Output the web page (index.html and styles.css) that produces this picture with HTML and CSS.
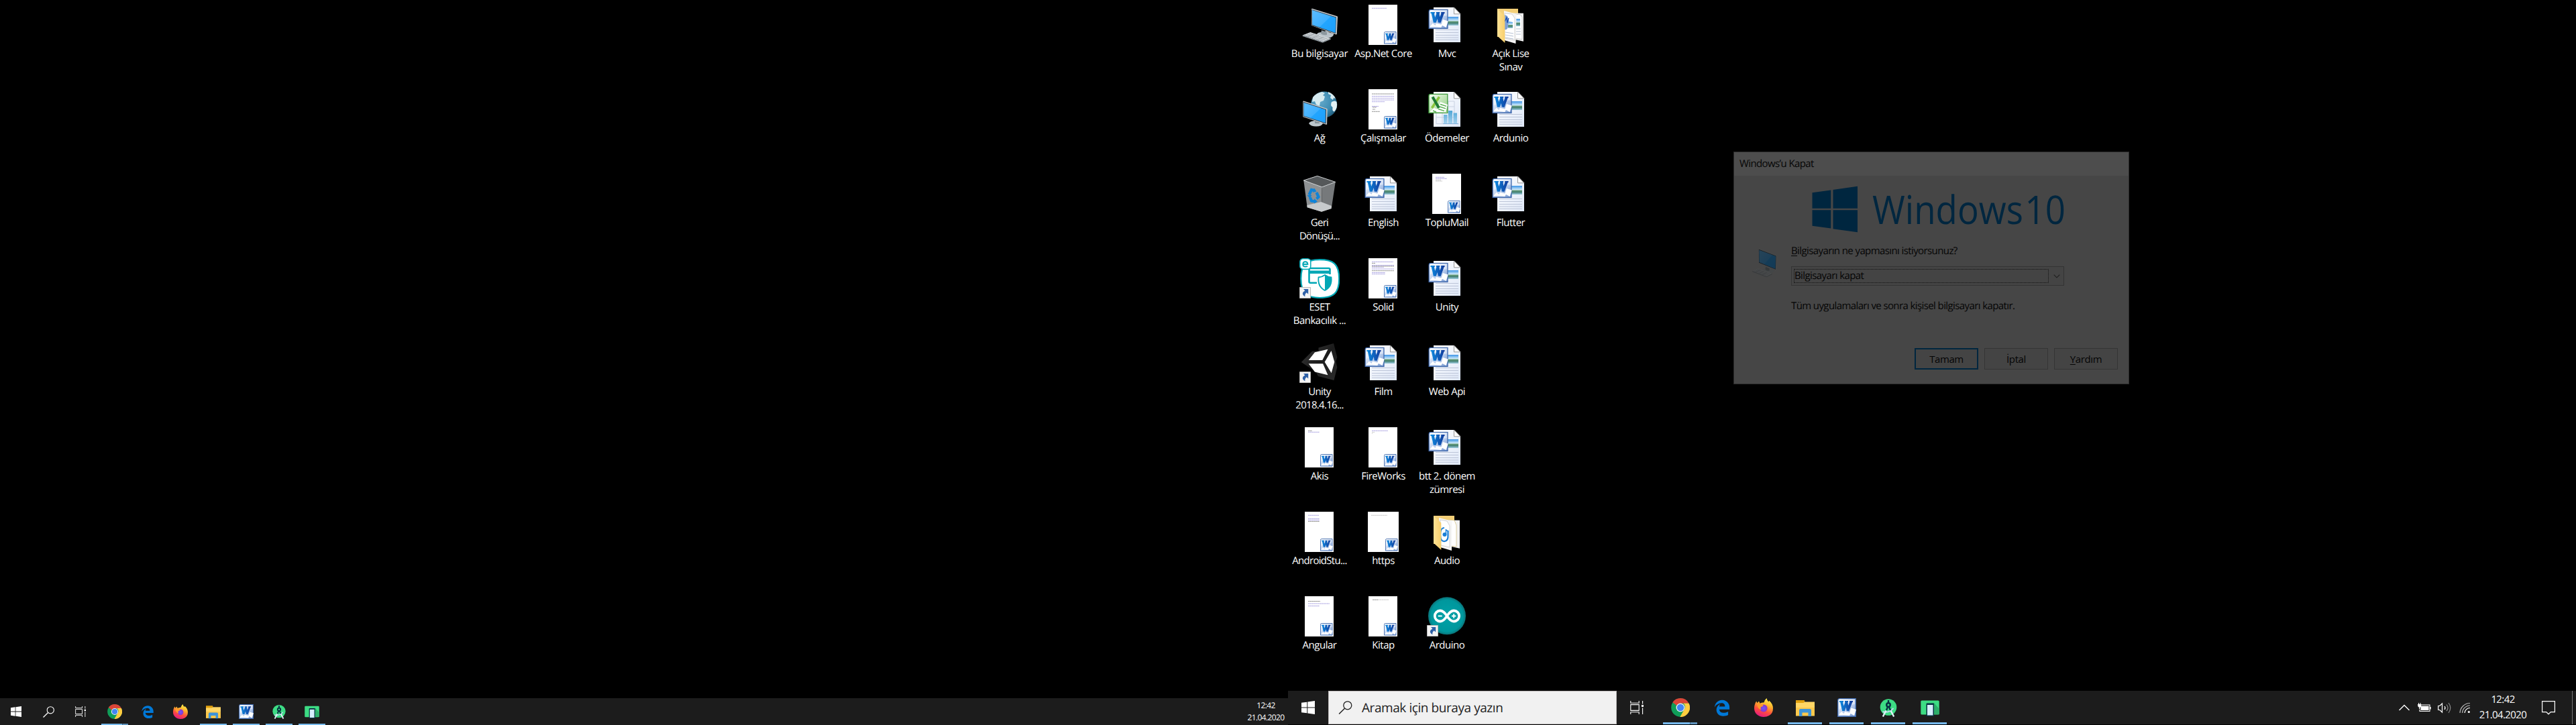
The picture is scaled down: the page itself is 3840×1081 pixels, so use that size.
FILE: index.html
```html
<!DOCTYPE html>
<html lang="tr">
<head>
<meta charset="utf-8">
<title>Masaüstü</title>
<link rel="stylesheet" href="styles.css">
</head>
<body>
<svg class="defs" aria-hidden="true">
  <defs>
    <linearGradient id="gScreen" x1="0" y1="0" x2="1" y2="1"><stop offset="0" stop-color="#5cbcff"/><stop offset=".52" stop-color="#3fb0ff"/><stop offset=".54" stop-color="#22a5ff"/><stop offset="1" stop-color="#1e9ffb"/></linearGradient>
    <linearGradient id="gPaper" x1="0" y1="0" x2="1" y2="1"><stop offset="0" stop-color="#fff"/><stop offset="1" stop-color="#dfe8f8"/></linearGradient>
    <linearGradient id="gWord" x1="0" y1="0" x2="1" y2="1"><stop offset="0" stop-color="#fafdff"/><stop offset=".6" stop-color="#b7cbec"/><stop offset="1" stop-color="#6f91cb"/></linearGradient>
    <linearGradient id="gW" gradientUnits="userSpaceOnUse" x1="3" y1="0" x2="23" y2="0"><stop offset="0" stop-color="#0d8be0"/><stop offset="1" stop-color="#123a9c"/></linearGradient>
    <linearGradient id="gExcel" x1="0" y1="0" x2="1" y2="1"><stop offset="0" stop-color="#f6fff2"/><stop offset="1" stop-color="#8ccb7c"/></linearGradient>
    <linearGradient id="gPhoto" x1="0" y1="0" x2="0" y2="1"><stop offset="0" stop-color="#3c94e6"/><stop offset=".45" stop-color="#cfeafa"/><stop offset=".55" stop-color="#6da07c"/><stop offset=".7" stop-color="#3f7d6c"/><stop offset="1" stop-color="#9ccbe2"/></linearGradient>
    <linearGradient id="gBar" x1="0" y1="0" x2="0" y2="1"><stop offset="0" stop-color="#4fa6d6"/><stop offset="1" stop-color="#a7d3ee"/></linearGradient>
    <linearGradient id="gFolder" x1="0" y1="0" x2="1" y2="0"><stop offset="0" stop-color="#ffe294"/><stop offset="1" stop-color="#f7cf6c"/></linearGradient>
    <radialGradient id="gGlobe" cx=".35" cy=".35" r=".75"><stop offset="0" stop-color="#66aacb"/><stop offset=".6" stop-color="#3e8db3"/><stop offset="1" stop-color="#1d5674"/></radialGradient>
    <linearGradient id="gFox" x1=".7" y1="0" x2=".3" y2="1"><stop offset="0" stop-color="#fff44f"/><stop offset=".35" stop-color="#ffb02b"/><stop offset=".65" stop-color="#ff4f3d"/><stop offset="1" stop-color="#e31587"/></linearGradient>
    <radialGradient id="gFoxCore"><stop offset="0" stop-color="#6b5cff"/><stop offset="1" stop-color="#9032c8"/></radialGradient>
    <radialGradient id="gArd"><stop offset="0" stop-color="#00a2a7"/><stop offset=".85" stop-color="#00979d"/><stop offset="1" stop-color="#0b7277"/></radialGradient>
    <linearGradient id="gUnity" x1="0" y1="0" x2="1" y2="1"><stop offset="0" stop-color="#3c3c3c"/><stop offset=".5" stop-color="#1c1c1c"/><stop offset="1" stop-color="#2c2c2c"/></linearGradient>
  </defs>

  <symbol id="pc" viewBox="0 0 60 60">
    <path d="M26 44q1-3 8-3l6-2 6 3q6 0 5 3-2 5-12 5-11-1-13-6z" fill="#b9c2c9"/>
    <path d="M33 38l8 3v4q-6 1-9-2z" fill="#8d989f"/>
    <path d="M18 6.300l1-.6 37.400 11.600.6.800-1.200 26-1 .4L18 31z" fill="#c9ced1"/>
    <path d="M18.400 7L55 18.600 54.200 43 18.600 31z" fill="#333b42"/>
    <path d="M19 8l35.400 11.200-.8 22.800L19.200 30z" fill="url(#gScreen)"/>
    <path d="M4.700 45.500L16.300 41l30.400 9.400-12 5.200z" fill="#cfd4d8"/>
    <path d="M8 45.200l27 8.600M11 44l27.500 8.600M14.500 42.700l27.500 8.500M12 47.600l10-4.300M19 50l10-4.200M26 52.500l10-4.500" stroke="#8b949b" stroke-width=".6" fill="none"/>
    <path d="M4.700 45.500l30 10 12-5.200v1.400l-12 5.100-30-9.800z" fill="#8f999f"/>
  </symbol>
  <symbol id="network" viewBox="0 0 60 60">
    <circle cx="36.700" cy="23" r="19.600" fill="url(#gGlobe)"/>
    <path d="M20 12q6-7 14-8l4 2-3 3 3 2-2 6-5 2-1 6-5-2-2-5-4 1z" fill="#d6ebf0"/>
    <path d="M43 4q8 3 11 10l-3-1-1 3-4-3 1-4-4-2z" fill="#d6ebf0"/>
    <path d="M48 19q5-3 7.500 0 2 8-3 14-4 1-3-6-4-3-1.500-8z" fill="#e2f1f4"/>
    <path d="M14 51q2-4 11-4t10 4q-2 4.500-10 4.500T14 51z" fill="#bcc6cc"/>
    <path d="M23 44l7 2v5h-7z" fill="#87939a"/>
    <path d="M5.300 18l1-.5L41 28.900l.6.800-.5 22.800-1 .2L5.400 41.200z" fill="#cdd2d5"/>
    <path d="M5.800 18.800L40 30l-.3 21.500L5.900 40.600z" fill="#333b42"/>
    <path d="M6.500 20L39 30.600l-.3 19.600L6.500 39.800z" fill="url(#gScreen)"/>
  </symbol>
  <symbol id="bin" viewBox="0 0 60 60">
    <path d="M6.300 10L26.700 3.400l27 9-20 7.500z" fill="#55585a"/>
    <path d="M6.300 10l27.400 9.900L33 56.700l-21.300-6.400z" fill="#8e9193"/>
    <path d="M33.700 19.900l20-7.500-6 39.600L33 56.700z" fill="#76797b"/>
    <path d="M11.300 47l21-5 15.700 6-.4 4L33 56.700l-21.300-6.400z" fill="#c7cacc"/>
    <path d="M6.300 10L26.700 3.400l27 9-20 7.500z" fill="none" stroke="#d5d8da" stroke-width="1"/>
    <g fill="none" stroke="#0f83d8" stroke-width="4.200"><path d="M14.500 31.500l3.500-7.500 5 1"/><path d="M25.500 28l3 6.500-3 3"/><path d="M24 41.500l-6-1-2-5"/></g>
    <path d="M11.500 32h7l-3 5zM22 21.500l3.500 5-5.500 1.500zM22 37v7.500l5-3z" fill="#0f83d8"/>
  </symbol>
  <symbol id="shortcut" viewBox="0 0 17 17">
    <path d="M.5.500h16v16H.5z" fill="#f3f3f3" stroke="#b9b9b9"/>
    <path d="M6 3h7.200v7.600l-2.400-2.400Q7.500 10.500 8.500 14.300 4.800 12 4.800 9.400q.2-2.200 3.600-3.900z" fill="#2d5fa6"/>
  </symbol>
  <symbol id="eset" viewBox="0 0 60 60">
    <path d="M30 2.200C50 2.200 59.200 8 59.200 30.500S50 59 30.500 59 2.300 52 2.300 30.500 10 2.200 30 2.200z" fill="#fff" stroke="#00a7b5" stroke-width="2.200"/>
    <path d="M26 36.800H16.500q-2 0-2-2V17q0-2 2-2h27q2 0 2 2v7" fill="none" stroke="#00a7b5" stroke-width="2.600"/>
    <path d="M14 18.500h32V23H14z" fill="#00a7b5"/>
    <path d="M38 25q4 3 9.500 3.500Q49 42.500 38 48 27 42.500 28.500 28.500 34 28 38 25z" fill="#fff" stroke="#00a7b5" stroke-width="1.800"/>
    <path d="M38 25q4 3 9.500 3.500Q49 42.500 38 48z" fill="#00a7b5"/>
    <rect x=".8" y=".8" width="16" height="15.600" rx="4.500" fill="#fff" stroke="#00a7b5" stroke-width="1.500"/>
    <path d="M5.500 8.900h6.800q-.2-3.600-3.500-3.600T5.300 9t3.700 3.600q1.800 0 3-.9" fill="none" stroke="#00a7b5" stroke-width="2"/>
    <use href="#shortcut" x="0" y="43" width="17" height="17"/>
  </symbol>
  <symbol id="unity" viewBox="0 0 60 60">
    <path d="M2.800 29L19 12.800l9.500-.3V7.500L51 1l5.300 20.500-2 6.500 2 8.500L51.500 56 28 50l-4-7z" fill="url(#gUnity)"/>
    <path d="M13.700 26L23 14.300 42.500 9.700 34.300 26zM13.700 31.300h21.400l7.400 17L23 43.500zM37.700 28.700L47.500 12l4.800 16.800-4.600 16.500z" fill="#fff"/>
    <use href="#shortcut" x="0" y="43" width="17" height="17"/>
  </symbol>
  <symbol id="arduino" viewBox="0 0 60 60">
    <circle cx="30" cy="29.300" r="28" fill="url(#gArd)"/>
    <path d="M30 29.500c-3.500-5.500-6-8-10.200-8a8 8 0 0 0 0 16c4.200 0 6.700-2.500 10.200-8s6-8 10.200-8a8 8 0 0 1 0 16c-4.200 0-6.700-2.500-10.200-8z" fill="none" stroke="#fff" stroke-width="3.800"/>
    <path d="M16.700 29.500h6M37 29.500h6.400M40.200 26.300v6.400" stroke="#fff" stroke-width="1.800"/>
    <use href="#shortcut" x="0" y="43" width="17" height="17"/>
  </symbol>

  <symbol id="wordmark-tile" viewBox="0 0 28 28">
    <path d="M3.500.700h23.800v26.600H.7V3.500Q.7.700 3.500.700z" fill="url(#gWord)" stroke="#3b64a8" stroke-width="1.300"/>
    <path d="M2 2h24v7Q12 10 2 17z" fill="#fff" opacity=".45"/>
    <path d="M6 5l3 13.500L13.500 6l2 12.500L20.500 5" fill="none" stroke="url(#gW)" stroke-width="3.800" stroke-linejoin="bevel"/>
    <path d="M3 5h6M11 5h5M18 5h5" stroke="url(#gW)" stroke-width="1.800"/>
    <path d="M2 25l4-5 6 5zM11 20l9 2-2 4-9-1zM20.500 14.500l7.500 2.500-3 9-7-4z" fill="#fff"/>
  </symbol>
  <symbol id="docbase" viewBox="0 0 60 60">
    <path d="M10 4h30.500L50 13.500V56H10z" fill="url(#gPaper)"/>
    <path d="M40.500 4v9.800H50z" fill="#fff" stroke="#8c8c8c" stroke-width=".9"/>
  </symbol>
  <symbol id="word" viewBox="0 0 60 60">
    <use href="#docbase" width="60" height="60"/>
    <rect x="31" y="18" width="16" height="13" fill="url(#gPhoto)"/>
    <path d="M13 37.500h34M13 41.500h34M13 45.500h34M13 49h34M13 52.300h34" stroke="#bcc5d8" stroke-width="1"/>
    <use href="#wordmark-tile" x="2.300" y="6.700" width="29.500" height="29.500"/>
  </symbol>
  <symbol id="excel" viewBox="0 0 60 60">
    <use href="#docbase" width="60" height="60"/>
    <path d="M14 18h27v33.500H14zM14 26h27M14 34h27M14 42h27M23 18v33M32 18v33" fill="none" stroke="#c9d2e2" stroke-width="1"/>
    <path d="M25 38h5.500v13.300H25zM32 32h6v19.300h-6zM39.500 35.500H45v15.800h-5.500z" fill="url(#gBar)"/>
    <path d="M24 51.500h23" stroke="#86b4dd"/>
    <path d="M5.500 7.400h25.300v28H3V10q0-2.600 2.500-2.600z" fill="url(#gExcel)" stroke="#3f9a3c" stroke-width="1.300"/>
    <path d="M4.500 34l6-6 20.500 6.500zM20 19l11 4-3 11-12-4z" fill="#fff"/>
    <path d="M20 22.500l9 2.800M19 26l9 2.800M17 29.500l9 2.800M9 32l5 2" stroke="#55ae4e" stroke-width="1.400"/>
    <path d="M18.500 11.500L7.500 28" stroke="#8cc63f" stroke-width="3.600"/><path d="M8.500 11.500L18 28" stroke="#1f7a33" stroke-width="4"/>
  </symbol>
  <symbol id="page" viewBox="0 0 60 60">
    <path d="M8 0h43v60H8z" fill="#fff"/>
    <use href="#wordmark-tile" x="31" y="40" width="18.700" height="18.700"/>
  </symbol>
  <symbol id="folderbase" viewBox="0 0 60 60">
    <path d="M10 6h31v42H10z" fill="#f3cf78"/>
    <path d="M30 12.500l19 .3v42L32 51z" fill="#f1f1f1"/>
  </symbol>
  <symbol id="folder-docs" viewBox="0 0 60 60">
    <use href="#folderbase" width="60" height="60"/>
    <path d="M36 14l8 .5 3 4v33l-10-1z" fill="#fff" stroke="#999" stroke-width=".5"/>
    <path d="M38 21h6v11h-6z" fill="url(#gPhoto)"/>
    <path d="M38 36h7M38 40h7M38 44h7" stroke="#b5c0d2"/>
    <path d="M20 9l18.500 5-1 44-17-5z" fill="#f5f5f5"/>
    <path d="M21 13l11 1 4 6v33l-15-3z" fill="#fff" stroke="#aaa" stroke-width=".5"/>
    <path d="M26 25l7 1v9h-7z" fill="url(#gPhoto)"/>
    <path d="M21 15q6 2 6 9l-1 9q-1 5-5 4z" fill="#7fa1d6"/>
    <path d="M21 25l3-6 1 8 2-7" stroke="#1c4fae" stroke-width="1.300" fill="none"/>
    <path d="M22 41l12 2M22 45l12 2M22 49l12 2" stroke="#b5c0d2"/>
    <path d="M10 6.500l11.300 10V57L10 46.500z" fill="url(#gFolder)"/>
  </symbol>
  <symbol id="folder-audio" viewBox="0 0 60 60">
    <use href="#folderbase" width="60" height="60"/>
    <path d="M32 12l9 1 3 7v32l-8-1z" fill="#fff" stroke="#d8c58b" stroke-width=".8"/>
    <path d="M18 9l19.500 5-.5 44-17-5z" fill="#f5f5f5"/>
    <path d="M20 12l10 2 4 7v32l-13-3z" fill="#fff" stroke="#bbb" stroke-width=".6"/>
    <path d="M26 24q-6 0-6 10.500T27 44q5-1 4.500-9V28" fill="none" stroke="#1b7fd6" stroke-width="2.200"/>
    <circle cx="26.500" cy="34" r="3" fill="#1b7fd6"/><path d="M28.500 34V27l3 2" stroke="#1b7fd6" stroke-width="1.500" fill="none"/>
    <path d="M10 6.500l11.300 10V57L10 46.500z" fill="url(#gFolder)"/>
  </symbol>

  <symbol id="winlogo" viewBox="0 0 20 20"><path d="M0 2.800l8.300-1.100v7.800H0zM9.300 1.500L20 0v9.500H9.300zM0 10.500h8.300v7.800L0 17.200zM9.300 10.500H20V20L9.300 18.500z" fill="#fff"/></symbol>
  <symbol id="search" viewBox="0 0 20 20"><circle cx="13.300" cy="6.800" r="6" fill="none" stroke="currentColor" stroke-width="1.300"/><path d="M9 11.200L.6 19.500" stroke="currentColor" stroke-width="1.500"/></symbol>
  <symbol id="taskview" viewBox="0 0 20 20"><path d="M.8 0v3.300h12.400V0M.8 20v-3.300h12.400V20M.8 5.600h12.400v8.800H.8zM18.600 0v4.500M18.600 10.500V20" fill="none" stroke="#fff" stroke-width="1.100"/><path d="M17 6h3v3h-3z" fill="#fff"/></symbol>
  <symbol id="chrome" viewBox="0 0 28 28">
    <circle cx="14" cy="14" r="13.800" fill="#0f9d58"/>
    <path d="M14 0a14 14 0 0 1 12.600 7.700H14a6.300 6.300 0 0 0-5.600 3.400L2.300 6.300A14 14 0 0 1 14 0z" fill="#db4437"/>
    <path d="M26.600 7.700a14 14 0 0 1-13.300 20.300l6.200-10.700a6.300 6.300 0 0 0-1.500-9.600z" fill="#ffcd40"/>
    <circle cx="14" cy="14" r="6.500" fill="#f1f1f1"/><circle cx="14" cy="14" r="5.200" fill="#4285f4"/>
  </symbol>
  <symbol id="edge" viewBox="-34 -40 580 560"><path fill="#0078d7" d="M486.290 243.670c0-44.032-7.754-84.465-28.801-122.400C416.498 47.879 343.912 8.001 258.893 8.001 118.962 7.724 40.617 113.214 26.330 227.680c42.429-61.312 117.073-121.376 220.375-124.966 0 0 109.666 0 99.420 104.957H169.997c6.369-37.386 18.554-58.986 34.339-78.926-75.048 34.900-121.850 96.100-120.742 188.320.830 71.448 50.124 144.836 120.743 171.976 83.357 31.843 192.760 7.200 240.132-21.324V363.307c-80.864 56.494-270.871 60.924-272.255-67.572h314.073v-52.065z"/></symbol>
  <symbol id="firefox" viewBox="0 0 28 28">
    <path d="M14 28C6 28 0 22.500 0 15 0 11 1.200 7.500 3.200 4.500L4.500 7.300 7 4.500l1.500 3.200Q12 6 14.500 6.500 15 3 18.500 0q.5 3.500 3 5.500Q22 4.500 22 3.500q6 5 6 11.500 0 8-6 11-3.500 2-8 2z" fill="url(#gFox)"/>
    <circle cx="14" cy="15" r="5.600" fill="url(#gFoxCore)"/>
    <path d="M4 9q5-2 9.500 1.500Q13 12.500 10 13q-1.500 2 .5 4Q6 17.500 4 9z" fill="#ff9a2b"/>
  </symbol>
  <symbol id="explorer" viewBox="0 0 28 28">
    <path d="M0 5.500h28v20.800H0z" fill="#ffd666"/>
    <path d="M0 7h11.500l2-2.500-1-1.500H0z" fill="#e0a00d"/><path d="M0 14h28v12.300H0z" fill="#fbc84c"/>
    <path d="M5 27V18q0-2 2-2h14q2 0 2 2v9h-4.500v-5.500h-9V27z" fill="#3d94d9"/>
  </symbol>
  <symbol id="astudio" viewBox="0 0 28 28">
    <circle cx="14" cy="13.500" r="12.300" fill="#3ddc84"/>
    <path d="M5.500 20q8.500 3 16-5" fill="none" stroke="#b8d8ea" stroke-width="2"/>
    <path d="M14 3v5" stroke="#073042" stroke-width="2.400"/><circle cx="14" cy="10" r="4" fill="#073042"/><circle cx="14" cy="10" r="1.500" fill="#3ddc84"/>
    <path d="M13 13l-2 5M15 13l2 5" stroke="#073042" stroke-width="2.400"/>
    <path d="M10.500 18.500L5.800 27.500M17.500 18.500l4.700 9" stroke="#e3eff7" stroke-width="2.400"/>
  </symbol>
  <symbol id="emulator" viewBox="0 0 28 28">
    <rect x=".3" y="3.500" width="27.400" height="21" rx="1.500" fill="#3ddc84"/>
    <path d="M14 8l6-1 7.700 9v8H12z" fill="#2cae6a"/>
    <rect x="8.500" y="7.500" width="11.500" height="19.500" rx="1" fill="#073042"/><path d="M10 10h8.500v15.500H10z" fill="#d7effe"/>
  </symbol>
</svg>

<main class="screens">
  <section class="monitor monitor--left">
    <div class="wallpaper"></div>
    <footer class="taskbar taskbar--small">
      <div class="sys"><svg width="16" height="16"><use href="#winlogo"/></svg></div>
      <div class="sys"><svg width="17" height="17"><use href="#search"/></svg></div>
      <div class="sys"><svg width="16" height="16"><use href="#taskview"/></svg></div>
      <nav class="apps">
        <div class="app running grouped"><svg><use href="#chrome"/></svg></div>
        <div class="app"><svg><use href="#edge"/></svg></div>
        <div class="app"><svg><use href="#firefox"/></svg></div>
        <div class="app running"><svg><use href="#explorer"/></svg></div>
        <div class="app running"><svg><use href="#wordmark-tile"/></svg></div>
        <div class="app running"><svg><use href="#astudio"/></svg></div>
        <div class="app running"><svg><use href="#emulator"/></svg></div>
      </nav>
      <div class="clock"><span>12:42</span><span>21.04.2020</span></div>
    </footer>
  </section>

  <section class="monitor monitor--right">
    <div class="wallpaper icons">
      <div class="icon"><svg><use href="#pc"/></svg><p class="loose">Bu bilgisayar</p></div>
      <div class="icon"><svg><use href="#network"/></svg><p>Ağ</p></div>
      <div class="icon"><svg><use href="#bin"/></svg><p class="cut">Geri<br>Dönüşü...</p></div>
      <div class="icon"><svg><use href="#eset"/></svg><p>ESET<br>Bankacılık ...</p></div>
      <div class="icon"><svg><use href="#unity"/></svg><p class="cut">Unity<br>2018.4.16...</p></div>
      <div class="icon"><svg viewBox="0 0 60 60"><use href="#page"/><path class="ink" d="M13 5.300h6"/><path class="link" d="M13 7.300h17"/></svg><p>Akis</p></div>
      <div class="icon"><svg viewBox="0 0 60 60"><use href="#page"/><path class="link" d="M13 5.300h16M13 10.500h17M13 12.500h17"/><path class="ink" d="M13 14.500h17"/></svg><p class="cut">AndroidStu...</p></div>
      <div class="icon"><svg viewBox="0 0 60 60"><use href="#page"/><path class="ink" d="M13 7.500h18"/><path class="link" d="M13 11h32M13 14.500h17"/></svg><p>Angular</p></div>

      <div class="icon"><svg viewBox="0 0 60 60"><use href="#page"/><path class="link" d="M13 5.300h22"/></svg><p>Asp.Net Core</p></div>
      <div class="icon"><svg viewBox="0 0 60 60"><use href="#page"/><path class="ink" d="M13 7h33M14 27h6M14 30h4M13 33.300h12"/><path class="link" d="M13 10.500h33M13 13.300h33M13 16h33M13 18.700h19M13 25.500h10"/></svg><p>Çalışmalar</p></div>
      <div class="icon"><svg><use href="#word"/></svg><p>English</p></div>
      <div class="icon"><svg viewBox="0 0 60 60"><use href="#page"/><path class="link" d="M13 5.500h32M13 10.500h33M13 13.300h18M13 16h33M13 21.500h20M13 23.500h20"/><path class="ink" d="M13 7.500h5M13 12h33M13 18.700h33"/></svg><p>Solid</p></div>
      <div class="icon"><svg><use href="#word"/></svg><p>Film</p></div>
      <div class="icon"><svg viewBox="0 0 60 60"><use href="#page"/><path class="link" d="M13 5.300h24"/><path class="faint" d="M13 7.500h4M13 9.500h1"/></svg><p>FireWorks</p></div>
      <div class="icon"><svg viewBox="0 0 60 60"><path d="M7 0h46v60H7z" fill="#fff"/><use href="#wordmark-tile" x="33" y="40" width="18.700" height="18.700"/><path class="faint" d="M12 5.300h24"/></svg><p>https</p></div>
      <div class="icon"><svg viewBox="0 0 60 60"><use href="#page"/><path class="ink" d="M14 5.300h8"/><path class="faint" d="M22 5.300h16"/></svg><p>Kitap</p></div>

      <div class="icon"><svg><use href="#word"/></svg><p>Mvc</p></div>
      <div class="icon"><svg><use href="#excel"/></svg><p>Ödemeler</p></div>
      <div class="icon"><svg viewBox="0 0 60 60"><use href="#page"/><path class="link" d="M13 5.300h13M13 7.300h17"/><path class="faint" d="M13 9.300h8M13 11h10"/></svg><p>TopluMail</p></div>
      <div class="icon"><svg><use href="#word"/></svg><p>Unity</p></div>
      <div class="icon"><svg><use href="#word"/></svg><p>Web Api</p></div>
      <div class="icon"><svg><use href="#word"/></svg><p>btt 2. dönem<br>zümresi</p></div>
      <div class="icon"><svg><use href="#folder-audio"/></svg><p>Audio</p></div>
      <div class="icon"><svg><use href="#arduino"/></svg><p>Arduino</p></div>

      <div class="icon"><svg><use href="#folder-docs"/></svg><p>Açık Lise<br>Sınav</p></div>
      <div class="icon"><svg><use href="#word"/></svg><p>Ardunio</p></div>
      <div class="icon"><svg><use href="#word"/></svg><p>Flutter</p></div>
    </div>

    <div class="dialog" role="dialog">
      <header class="dialog-title">Windows’u Kapat</header>
      <svg class="brand" viewBox="0 0 376 70">
        <path d="M.5 10.300L28.300 6.500v27.300H.5zM31.500 6L68 .8v33H31.500zM.5 36.300h27.800v27.300L.5 59.800zM31.500 36.300H68v33L31.500 64.200z" fill="#00263f"/>
        <text x="90" y="56.500" textLength="288" lengthAdjust="spacingAndGlyphs">Windows<tspan dx="3">10</tspan></text>
      </svg>
      <div class="dialog-body">
        <svg class="dialog-pc" viewBox="0 0 60 60" preserveAspectRatio="none"><use href="#pc" width="60" height="60"/></svg>
        <div class="form">
          <label><u>B</u>ilgisayarın ne yapmasını istiyorsunuz?</label>
          <div class="combo"><span>Bilgisayarı kapat</span><svg width="10" height="6" viewBox="0 0 10 6"><path d="M.7.700L5 5 9.300.700" fill="none" stroke="#222" stroke-width="1.200"/></svg></div>
          <p>Tüm uygulamaları ve sonra kişisel bilgisayarı kapatır.</p>
        </div>
      </div>
      <div class="buttons">
        <button class="primary">Tamam</button><button>İptal</button><button><u>Y</u>ardım</button>
      </div>
    </div>

    <footer class="taskbar taskbar--large">
      <div class="sys"><svg width="20" height="20"><use href="#winlogo"/></svg></div>
      <div class="searchbox"><svg width="21" height="20"><use href="#search"/></svg><span>Aramak için buraya yazın</span></div>
      <div class="sys"><svg width="20" height="20"><use href="#taskview"/></svg></div>
      <nav class="apps">
        <div class="app running grouped"><svg><use href="#chrome"/></svg></div>
        <div class="app"><svg><use href="#edge"/></svg></div>
        <div class="app"><svg><use href="#firefox"/></svg></div>
        <div class="app running"><svg><use href="#explorer"/></svg></div>
        <div class="app running"><svg><use href="#wordmark-tile"/></svg></div>
        <div class="app running"><svg><use href="#astudio"/></svg></div>
        <div class="app running"><svg><use href="#emulator"/></svg></div>
      </nav>
      <div class="tray">
        <svg viewBox="0 0 20 20"><path d="M2.500 14L10 6.500l7.500 7.500" fill="none" stroke="#fff" stroke-width="1.400"/></svg>
        <svg viewBox="0 0 20 20"><path d="M5 6h13v9.500H3V13" fill="none" stroke="#fff" stroke-width="1.100"/><path d="M4.500 7.800h12V14h-12zM18 9h1.700v3.500H18zM0 5h5.200v2.500q0 1.800-1.800 2v2.800H2v-2.800Q.3 9.300.3 7.500zM1 3h1v2H1zM3.500 3h1v2h-1z" fill="#fff"/></svg>
        <svg viewBox="0 0 20 20"><path d="M.6 7.500h2.200L6.500 4v13l-3.700-3.500H.6z" fill="none" stroke="#fff" stroke-width="1.200"/><path d="M10 8q2 2.500 0 5" fill="none" stroke="#fff" stroke-width="1.200"/><path d="M13 5.500q4 5 0 9.500M16 3q5.500 7.500 0 15" fill="none" stroke="#8a8a8a" stroke-width="1.200"/></svg>
        <svg viewBox="0 0 20 20"><g fill="none" stroke="#b5b5b5" stroke-width="1.200"><path d="M3 18A15 15 0 0 1 18 3.500"/><path d="M6.500 18A11.500 11.500 0 0 1 18 7"/><path stroke="#fff" d="M10 18a8 8 0 0 1 8-7.500"/></g><circle cx="16.300" cy="16.500" r="1.600" fill="#fff"/></svg>
      </div>
      <div class="clock"><span>12:42</span><span>21.04.2020</span></div>
      <svg class="notes" viewBox="0 0 20 21"><path d="M.6.600h18.800v16h-6L10 19.800l-3.300-3.200H.6z" fill="none" stroke="#fff" stroke-width="1.200"/></svg>
      <div class="peek"></div>
    </footer>
  </section>
</main>
</body>
</html>
```
FILE: styles.css
```css
* { box-sizing: border-box; }
body {
  margin: 0;
  background: #000;
  color: #fff;
  font: 15px/20px "Open Sans", "Noto Sans", sans-serif;
  text-rendering: geometricPrecision;
}
p { margin: 0; }
svg { display: block; flex: none; }
.defs { position: absolute; width: 0; height: 0; }

.screens { display: flex; width: 3840px; height: 1081px; overflow: hidden; }
.monitor { display: flex; flex-direction: column; width: 1920px; height: 1081px; position: relative; }
.monitor--right { padding-bottom: 1px; }
.wallpaper { flex: 1; min-height: 0; }

/* Desktop icons fill column by column */
.icons {
  display: grid;
  grid-auto-flow: column;
  grid-template-rows: repeat(8, 126px);
  grid-auto-columns: 95px;
}
.icon { display: flex; flex-direction: column; align-items: center; gap: 3px; width: 94px; padding-top: 7px; }
.icon svg { width: 60px; height: 60px; }
.icon p { text-align: center; white-space: nowrap; letter-spacing: -.5px; }
.icon p.loose { letter-spacing: -.35px; }
.icon p.cut { letter-spacing: -.7px; }
.ink, .link, .faint { fill: none; stroke-width: .8; stroke-dasharray: 2.500 .3; }
.ink { stroke: #777; }
.link { stroke: #9a92dc; }
.faint { stroke: #bbb; }

/* Shutdown dialog, dimmed */
.dialog {
  position: absolute;
  left: 664px;
  top: 226px;
  display: flex;
  flex-direction: column;
  width: 590px;
  height: 347px;
  background: #464646;
  color: #050505;
  letter-spacing: -.6px;
  outline: 1px solid #2b2b2b;
  outline-offset: -1px;
}
.dialog-title { height: 36px; padding: 8px 9px; background: #4d4d4d; }
.brand { width: 376px; height: 70px; margin: 15px 0 0 117px; overflow: visible; }
.brand text { font: 400 59px "Open Sans", sans-serif; letter-spacing: 0; fill: #00263f; }
.dialog-body { display: flex; gap: 19px; padding: 17px 0 0 25px; }
.dialog-pc { width: 42px; height: 50px; margin-top: 2px; filter: brightness(.36); opacity: .85; }
.form { width: 407px; }
.form label { display: block; }
.combo {
  display: flex;
  align-items: center;
  justify-content: space-between;
  height: 29px;
  margin: 13px 0 20px;
  padding: 0 5px 0 3px;
  border: 1px solid #343434;
  background: #444;
}
.combo span { width: 380px; height: 21px; outline: 1px dotted #111; outline-offset: -1px; line-height: 20px; padding-left: 1px; }
.buttons { display: flex; justify-content: flex-end; gap: 9px; margin: auto 17px 22px 0; }
.buttons button {
  width: 95px;
  height: 32px;
  padding: 0;
  border: 1px solid #353535;
  background: #444;
  color: inherit;
  font: inherit;
  letter-spacing: -.4px;
}
.buttons .primary { border: 2px solid #00263f; }
u { text-underline-offset: 2px; text-decoration-thickness: 1px; }

/* Taskbars */
.taskbar { display: flex; align-items: stretch; background: #1c1c1c; }
.taskbar--small { height: 40px; --sys: 48px; --app: 40px; --glyph: 22px; --line: 2px; }
.taskbar--large { height: 50px; --sys: 60px; --app: 51px; --glyph: 28px; --line: 3px; }
.sys { display: flex; align-items: center; justify-content: center; width: var(--sys); }
.apps { display: flex; gap: 9px; padding-left: 7px; }
.taskbar--large .apps { gap: 11px; padding-left: 9px; }
.app { display: flex; align-items: center; justify-content: center; width: var(--app); border-bottom: var(--line) solid transparent; padding-top: var(--line); }
.app svg { width: var(--glyph); height: var(--glyph); }
.running { border-bottom-color: #76b9ed; }
.grouped { border-image: linear-gradient(90deg, #76b9ed 78%, #44688a 78%, #44688a 80%, #5f93bc 80%) 0 0 3 0; }
.clock { display: flex; flex-direction: column; justify-content: center; align-items: center; }
.taskbar--small .clock { width: 56px; margin: 0 5px 0 auto; font-size: 12px; line-height: 18px; letter-spacing: -.6px; }
.taskbar--large .clock { width: 84px; margin: 0 16px 0 5px; line-height: 23px; letter-spacing: -.6px; }
.searchbox {
  display: flex;
  align-items: center;
  gap: 14px;
  width: 430px;
  padding-left: 14px;
  border: 1px solid #bdb9b9;
  background: #f1f1f1;
  color: #222;
  font-size: 19px;
  letter-spacing: -.43px;
}
.tray { display: flex; align-items: center; gap: 10px; margin-left: auto; }
.tray svg { width: 20px; height: 20px; }
.notes { width: 20px; height: 21px; align-self: center; margin-right: 25px; }
.peek { width: 6px; border-left: 1px solid #777; }
```
